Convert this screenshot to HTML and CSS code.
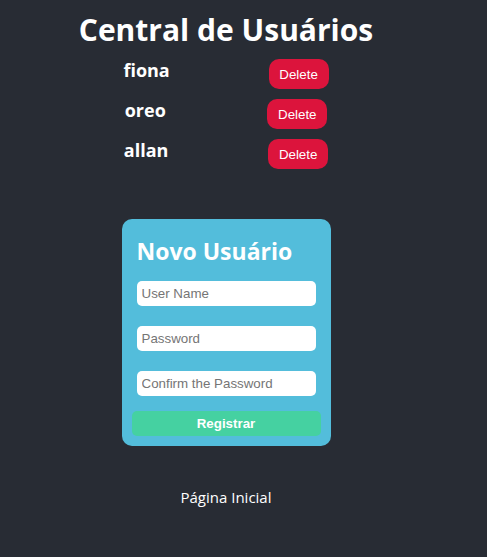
FILE: index.html
```html
<!DOCTYPE html>
<html lang="pt-BR">
<head>
<meta charset="utf-8">
<meta name="viewport" content="width=device-width, initial-scale=1">
<title>Central de Usuários</title>
<link rel="stylesheet" href="styles.css">
</head>
<body>
<main class="page">
  <h1 class="title">Central de Usuários</h1>
  <ul class="users">
    <li class="user"><h3 class="user-name">fiona</h3><button class="delete" type="button">Delete</button></li>
    <li class="user"><h3 class="user-name">oreo</h3><button class="delete" type="button">Delete</button></li>
    <li class="user"><h3 class="user-name">allan</h3><button class="delete" type="button">Delete</button></li>
  </ul>
  <form class="card">
    <h2 class="card-title">Novo Usuário</h2>
    <input class="field" type="text" placeholder="User Name" aria-label="User Name">
    <input class="field" type="password" placeholder="Password" aria-label="Password">
    <input class="field" type="password" placeholder="Confirm the Password" aria-label="Confirm the Password">
    <button class="register" type="submit">Registrar</button>
  </form>
  <a class="home" href="#">Página Inicial</a>
</main>
</body>
</html>
```
FILE: styles.css
```css
* {
  box-sizing: border-box;
  margin: 0;
  padding: 0;
}

body {
  background: #282c34;
  color: #fff;
  font-family: "Segoe UI", "Open Sans", "Noto Sans", sans-serif;
}

button,
input {
  font-family: "Liberation Sans", Arial, sans-serif;
}

.page {
  display: flex;
  flex-direction: column;
  align-items: center;
  padding: 8px 35px 48px 0;
}

.title {
  font-size: 30px;
  line-height: 43px;
}

.users {
  display: flex;
  flex-direction: column;
  gap: 10px;
  width: 100%;
  max-width: 304px;
  margin-top: 8px;
  list-style: none;
}

.user {
  display: flex;
  justify-content: space-around;
  align-items: flex-start;
}

.user-name {
  font-size: 18px;
  line-height: 22px;
}

.delete {
  width: 60px;
  height: 30px;
  border: 0;
  border-radius: 10px;
  background: #dc143c;
  color: #fff;
}

.card {
  display: flex;
  flex-direction: column;
  margin-top: 50px;
  padding: 15px 10px 10px;
  border-radius: 10px;
  background: #53bddb;
}

.card-title {
  margin: 0 5px 13px;
  font-size: 23px;
  line-height: 34px;
}

.field {
  width: 179px;
  height: 25px;
  margin: 0 5px 20px;
  padding: 0 5px;
  border: 0;
  border-radius: 5px;
  background: #fff;
  color: #222;
}

.field::placeholder {
  color: #757575;
}

.register {
  height: 25px;
  margin-top: -5px;
  border: 0;
  border-radius: 5px;
  background: #45d1a1;
  color: #fff;
  font-weight: bold;
}

.home {
  margin-top: 40px;
  color: #fff;
  font-size: 15px;
  line-height: 22px;
  text-decoration: none;
}
```
